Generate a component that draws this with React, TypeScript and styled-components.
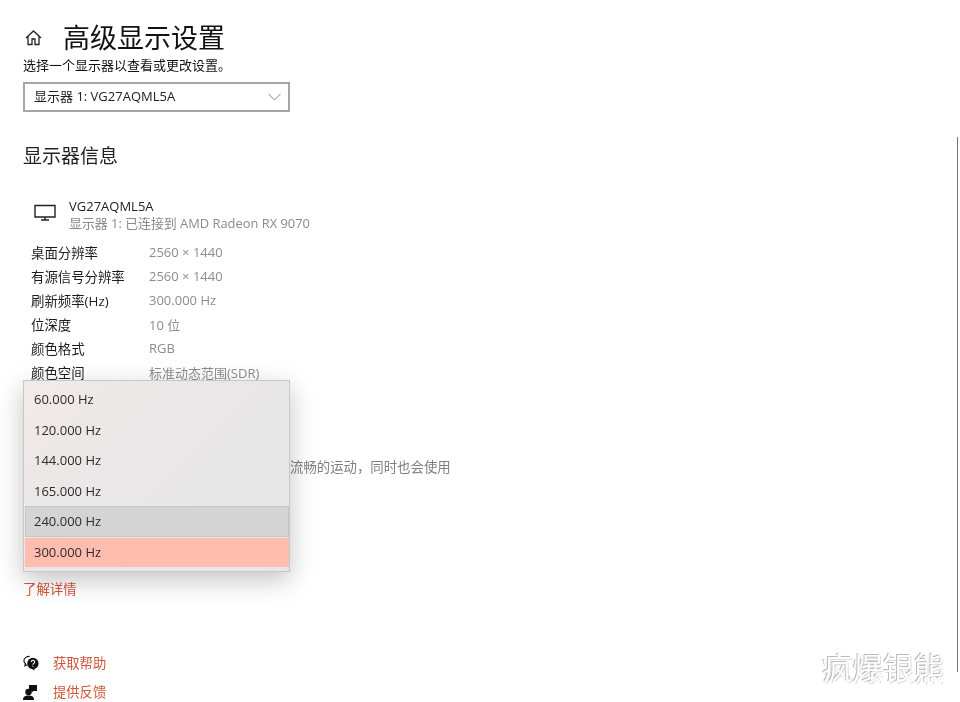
import React from "react";
import styled, { createGlobalStyle } from "styled-components";

const Global = createGlobalStyle`
  html, body { margin: 0; padding: 0; background: #fff; }
  body { font-family: "Open Sans", "Noto Sans CJK SC", sans-serif; overflow: hidden; }
`;
const Page = styled.div`
  position: relative; width: 960px; height: 702px; overflow: hidden; box-sizing: border-box;
  padding: 20px 0 0 23px; color: #1a1a1a; filter: blur(0.4px);
`;
const TitleRow = styled.div`display: flex; align-items: center; height: 37px; gap: 20px;`;
const HomeButton = styled.span`display: flex; width: 19px; margin: -2px 0 0 1px; color: #222;`;
const Title = styled.h1`margin: -2px 0 0; font-size: 27px; font-weight: 400; line-height: 37px; color: #111;`;
const Sub = styled.div`font-size: 13px; line-height: 16px; color: #111;`;
const Select = styled.div`
  box-sizing: border-box; width: 267px; height: 30px; margin-top: 9px; border: 2px solid #a6a6a6;
  display: flex; align-items: center; justify-content: space-between; padding: 0 7px 3px 9px;
  font-size: 13px; color: #222;
`;
const Chevron = styled.svg`margin-top: 3px;`;
const SectionTitle = styled.h2`margin: 30px 0 0; font-size: 19px; font-weight: 400; line-height: 28px; color: #222;`;
const MonitorRow = styled.div`display: flex; margin: 28px 0 0 11px; gap: 13px; align-items: flex-start;`;
const MonitorIcon = styled.span`display: flex; margin-top: 6px; color: #222;`;
const MonitorName = styled.div`font-size: 13px; line-height: 17px; color: #222;`;
const MonitorSub = styled.div`font-size: 12.9px; line-height: 17px; color: #8a8a8a;`;
const InfoTable = styled.div`display: grid; grid-template-columns: 118px 1fr; margin: 8px 0 0 8px; grid-auto-rows: 24px; align-items: center; font-size: 13px;`;
const InfoLabel = styled.div`color: #1c1c1c; font-size: 13.4px; white-space: nowrap;`;
const InfoValue = styled.div`color: #8c8c8c;`;
const Para = styled.div`margin-top: 74px; padding-left: 267px; font-size: 13.4px; line-height: 18px; color: #808080; white-space: nowrap;`;
const LearnMore = styled.a`display: block; margin-top: 104px; font-size: 13.4px; line-height: 18px; color: #d2553a;`;
const HelpList = styled.div`display: flex; flex-direction: column; gap: 11px; margin-top: 56px;`;
const HelpRow = styled.div`display: flex; align-items: center; gap: 14px; height: 18px;`;
const HelpIcon = styled.span`display: flex; width: 16px; color: #111;`;
const HelpLink = styled.a`font-size: 13.3px; line-height: 18px; color: #d2553a;`;
const Popup = styled.div`
  position: absolute; left: 23px; top: 380px; width: 267px; height: 192px; box-sizing: border-box;
  padding: 3px 0 4px 1px; border: 1px solid #c8c8c8;
  background: linear-gradient(135deg, #f2eae8 0%, #e9e7e7 35%, #e7e7e7 100%);
  box-shadow: 0 8px 24px rgba(0,0,0,.24);
`;
const Option = styled.div<{ $state?: "hover" | "selected" }>`
  box-sizing: border-box; height: 30.5px; display: flex; align-items: center; padding-left: 9px;
  font-size: 13px; color: #2c2c2c;
  ${p => p.$state === "hover" ? "background:#d4d4d4; border:1px solid #c6c6c6; padding-left:8px;" : ""}
  ${p => p.$state === "selected" ? "background:#ffbdb0; margin-top:1px; height:29px;" : ""}
`;
const Watermark = styled.div`
  position: absolute; left: 822px; top: 650px; font-size: 30.5px; line-height: 36px; color: #fff;
  text-shadow: -1px -1px 0 #bbb, 1px 1px 0 #ddd;
`;
const Scrollbar = styled.div`position: absolute; right: 2px; top: 137px; width: 1px; height: 535px; background: #777;`;

const rows = [
  ["桌面分辨率", "2560 × 1440"], ["有源信号分辨率", "2560 × 1440"], ["刷新频率(Hz)", "300.000 Hz"],
  ["位深度", "10 位"], ["颜色格式", "RGB"], ["颜色空间", "标准动态范围(SDR)"],
];
const rates: [string, "hover" | "selected" | undefined][] = [
  ["60.000 Hz", undefined], ["120.000 Hz", undefined], ["144.000 Hz", undefined],
  ["165.000 Hz", undefined], ["240.000 Hz", "hover"], ["300.000 Hz", "selected"],
];

export default function App() {
  return (
    <Page>
      <Global />
      <TitleRow>
        <HomeButton>
          <svg width="19" height="19" viewBox="0 0 19 19" fill="none" stroke="currentColor" strokeWidth="1.3">
            <path d="M2 10 9.500 3 17 10M4 8.500V16.500H8V11H11V16.500H15V8.500" />
          </svg>
        </HomeButton>
        <Title>高级显示设置</Title>
      </TitleRow>
      <Sub>选择一个显示器以查看或更改设置。</Sub>
      <Select>
        <span>显示器 1: VG27AQML5A</span>
        <Chevron width="13" height="8" viewBox="0 0 13 8" fill="none" stroke="#888" strokeWidth="1"><path d="M.5 1l6 6 6-6" /></Chevron>
      </Select>
      <SectionTitle>显示器信息</SectionTitle>
      <MonitorRow>
        <MonitorIcon>
          <svg width="22" height="18" viewBox="0 0 22 18" fill="none" stroke="currentColor" strokeWidth="1.4">
            <path d="M1 1.500h20v11.500H1zM11 13v3M7 16h8" />
          </svg>
        </MonitorIcon>
        <div>
          <MonitorName>VG27AQML5A</MonitorName>
          <MonitorSub>显示器 1: 已连接到 AMD Radeon RX 9070</MonitorSub>
        </div>
      </MonitorRow>
      <InfoTable>
        {rows.map(([k, v]) => (
          <React.Fragment key={k}>
            <InfoLabel>{k}</InfoLabel>
            <InfoValue>{v}</InfoValue>
          </React.Fragment>
        ))}
      </InfoTable>
      <Para>流畅的运动，同时也会使用</Para>
      <LearnMore>了解详情</LearnMore>
      <HelpList>
        <HelpRow>
          <HelpIcon>
            <svg width="17" height="16" viewBox="0 0 17 16" fill="currentColor">
              <path d="M7 1C3.600 1 1 3 1 5.600c0 1.300.7 2.400 1.600 3.200L2 11l2.600-1.200" fill="none" stroke="currentColor" strokeWidth="1.200" />
              <circle cx="10.500" cy="8.500" r="6" />
              <path d="M9 14l3 2v-2z" />
              <path d="M8.800 7a1.800 1.800 0 1 1 2.600 1.600c-.6.3-.9.6-.9 1.200M10.500 11v1" fill="none" stroke="#fff" strokeWidth="1.100" />
            </svg>
          </HelpIcon>
          <HelpLink>获取帮助</HelpLink>
        </HelpRow>
        <HelpRow>
          <HelpIcon>
            <svg width="15" height="16" viewBox="0 0 15 16" fill="currentColor">
              <circle cx="5.500" cy="8" r="3.200" />
              <path d="M0 16c0-3.200 2.200-4.400 5.500-4.400S11 12.800 11 16z" />
              <path d="M6 1h8v6H10.500L8.500 8.500V7H6z" />
            </svg>
          </HelpIcon>
          <HelpLink>提供反馈</HelpLink>
        </HelpRow>
      </HelpList>
      <Popup>
        {rates.map(([r, s]) => <Option key={r} $state={s}>{r}</Option>)}
      </Popup>
      <Watermark>疯爆银熊</Watermark>
      <Scrollbar />
    </Page>
  );
}
